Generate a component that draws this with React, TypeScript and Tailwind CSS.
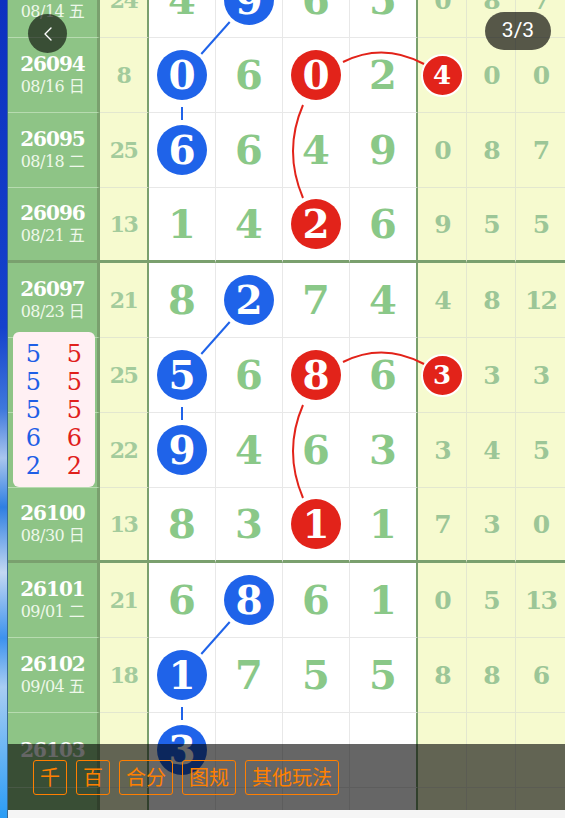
import React from 'react'
import { ChevronLeft } from 'lucide-react'

type Row = {
  issue: string
  date?: string
  sum?: number
  digits: (number | null)[]
  blue?: number
  red?: number
  right?: number[]
  rightRed?: boolean
}

// rows 5 and 6 sit under the pink summary card, so their issue cell is left blank
const rows: Row[] = [
  { issue: '26093', date: '08/14 五', sum: 24, digits: [4, 9, 6, 5], blue: 1, right: [0, 8, 7] },
  { issue: '26094', date: '08/16 日', sum: 8, digits: [0, 6, 0, 2], blue: 0, red: 2, right: [4, 0, 0], rightRed: true },
  { issue: '26095', date: '08/18 二', sum: 25, digits: [6, 6, 4, 9], blue: 0, right: [0, 8, 7] },
  { issue: '26096', date: '08/21 五', sum: 13, digits: [1, 4, 2, 6], red: 2, right: [9, 5, 5] },
  { issue: '26097', date: '08/23 日', sum: 21, digits: [8, 2, 7, 4], blue: 1, right: [4, 8, 12] },
  { issue: '', sum: 25, digits: [5, 6, 8, 6], blue: 0, red: 2, right: [3, 3, 3], rightRed: true },
  { issue: '', sum: 22, digits: [9, 4, 6, 3], blue: 0, right: [3, 4, 5] },
  { issue: '26100', date: '08/30 日', sum: 13, digits: [8, 3, 1, 1], red: 2, right: [7, 3, 0] },
  { issue: '26101', date: '09/01 二', sum: 21, digits: [6, 8, 6, 1], blue: 1, right: [0, 5, 13] },
  { issue: '26102', date: '09/04 五', sum: 18, digits: [1, 7, 5, 5], blue: 0, right: [8, 8, 6] },
  { issue: '26103', digits: [3, null, null, null], blue: 0 },
  { issue: '', digits: [null, null, null, null] },
]

const pinkRows = [5, 5, 5, 6, 2]

const serif = "font-['DejaVu_Serif','Noto_Sans_CJK_SC',serif]"

function TrendRow({ row, index }: { row: Row; index: number }) {
  const thick = index % 4 === 3
  const issueLine = thick ? 'border-b-[3px] border-b-[#7aa06e]' : 'border-b border-b-[#b7dbb0]'
  const whiteLine = thick ? 'border-b-[3px] border-b-[#7aa06e]' : 'border-b border-b-[#e8e8e8]'
  const yellowLine = thick ? 'border-b-[3px] border-b-[#7aa06e]' : 'border-b border-b-[#e3e7cf]'

  return (
    <div className={`flex h-[75px] ${serif}`}>
      <div className={`w-[92px] shrink-0 bg-[#8ec486] border-r-[3px] border-r-[#7aa06e] flex flex-col items-center justify-center ${issueLine}`}>
        {row.issue && (
          <div className="text-[20px] leading-[24px] font-bold text-white tracking-[-1px]">{row.issue}</div>
        )}
        {row.date && <div className="text-[16px] leading-[22px] text-[#eef8ea] tracking-[-0.5px]">{row.date}</div>}
      </div>
      <div className={`w-[49px] shrink-0 bg-[#f6facf] border-r-2 border-r-[#7aa06e] flex items-center justify-center text-[22px] font-bold text-[#a3cb9c] tracking-[-1.5px] ${yellowLine}`}>
        {row.sum}
      </div>
      {row.digits.map((d, i) => {
        const last = i === 3
        const isBlue = row.blue === i
        const isRed = row.red === i
        return (
          <div
            key={i}
            className={`${last ? 'w-[68px] border-r-2 border-r-[#7aa06e]' : 'w-[67px] border-r border-r-[#e8e8e8]'} shrink-0 bg-white flex items-center justify-center ${whiteLine}`}
          >
            {d !== null &&
              (isBlue || isRed ? (
                <div
                  className={`w-[50px] h-[50px] rounded-full flex items-center justify-center text-white font-bold text-[39px] leading-none ${isBlue ? 'bg-[#1f63e9]' : 'bg-[#e2231a]'}`}
                >
                  {d}
                </div>
              ) : (
                <span className="text-[40px] leading-none font-bold text-[#8ac888]">{d}</span>
              ))}
          </div>
        )
      })}
      {[0, 1, 2].map((i) => (
        <div
          key={i}
          className={`w-[49px] shrink-0 bg-[#f6facf] flex items-center justify-center ${i < 2 ? 'border-r border-r-[#e3e7cf]' : ''} ${yellowLine}`}
        >
          {row.right &&
            (i === 0 && row.rightRed ? (
              <div className="w-[43px] h-[43px] rounded-full bg-[#e2231a] border-[2.5px] border-white flex items-center justify-center text-white font-bold text-[26px] leading-none">
                {row.right[i]}
              </div>
            ) : (
              <span className="text-[25px] leading-none font-bold text-[#9cc697] tracking-[-2px]">{row.right[i]}</span>
            ))}
        </div>
      ))}
    </div>
  )
}

export default function App() {
  return (
    <div className="w-[565px] h-[818px] overflow-hidden flex bg-white">
      <div className="w-[8px] shrink-0 border-r border-r-[#3a6a92] bg-[linear-gradient(180deg,#0c31c0_0%,#1542cc_40%,#3f78dc_50%,#a9c6ee_56%,#2f7fe2_62%,#c3d8f2_70%,#3d92ee_78%,#a8cdf3_84%,#2a9cf5_100%)]" />
      <div className="flex-1 flex flex-col">
        <div className="relative h-[810px] overflow-hidden">
          <div className="-mt-[37px]">
            {rows.map((r, i) => (
              <TrendRow key={i} row={r} index={i} />
            ))}
          </div>

          <svg className="absolute left-0 top-0 pointer-events-none" width="557" height="810" viewBox="8 0 557 810">
            {[0, 300, 600].map((g) => (
              <g key={g} stroke="#1f63e9" strokeWidth="2">
                <line x1="229.7" y1={22 + g} x2="201.3" y2={54 + g} />
                <line x1="182" y1={107 + g} x2="182" y2={120 + g} />
              </g>
            ))}
            {[0, 300].map((g) => (
              <g key={g} stroke="#e2231a" strokeWidth="2" fill="none">
                <path d={`M343 ${62 + g} Q383 ${42 + g} 424 ${64 + g}`} />
                <path d={`M303 ${105 + g} Q283 ${151 + g} 303 ${198 + g}`} />
              </g>
            ))}
          </svg>

          <div className={`absolute left-[5px] top-[332px] w-[82px] h-[155px] rounded-[6px] bg-[#fff0f3] pt-[8px] grid grid-cols-2 content-start ${serif}`}>
            {pinkRows.map((n, i) => (
              <React.Fragment key={i}>
                <div className="text-center text-[24px] leading-[28px] text-[#1f5fe6]">{n}</div>
                <div className="text-center text-[24px] leading-[28px] text-[#e0201b]">{n}</div>
              </React.Fragment>
            ))}
          </div>

          <div className="absolute left-[20px] top-[14px] w-[39px] h-[39px] rounded-full bg-black/60 flex items-center justify-center">
            <ChevronLeft size={24} strokeWidth={1.4} color="#ffffff" />
          </div>

          <div className="absolute right-[14px] top-[12px] w-[66px] h-[38px] rounded-full bg-black/65 flex items-center justify-center text-white text-[21px] font-['Roboto',sans-serif]">
            3/3
          </div>

          <div className="absolute left-0 right-0 bottom-0 h-[66px] bg-black/60 flex items-center gap-[9px] pl-[25px] font-['Noto_Sans_CJK_SC',sans-serif]">
            {['千', '百', '合分', '图规', '其他玩法'].map((t) => (
              <div
                key={t}
                className="h-[35px] px-[6px] border border-[#ff7f00] rounded-[3px] flex items-center text-[20px] leading-none text-[#ff8000]"
              >
                {t}
              </div>
            ))}
          </div>
        </div>
        <div className="h-[8px] bg-[#f5f5f5]" />
      </div>
    </div>
  )
}
